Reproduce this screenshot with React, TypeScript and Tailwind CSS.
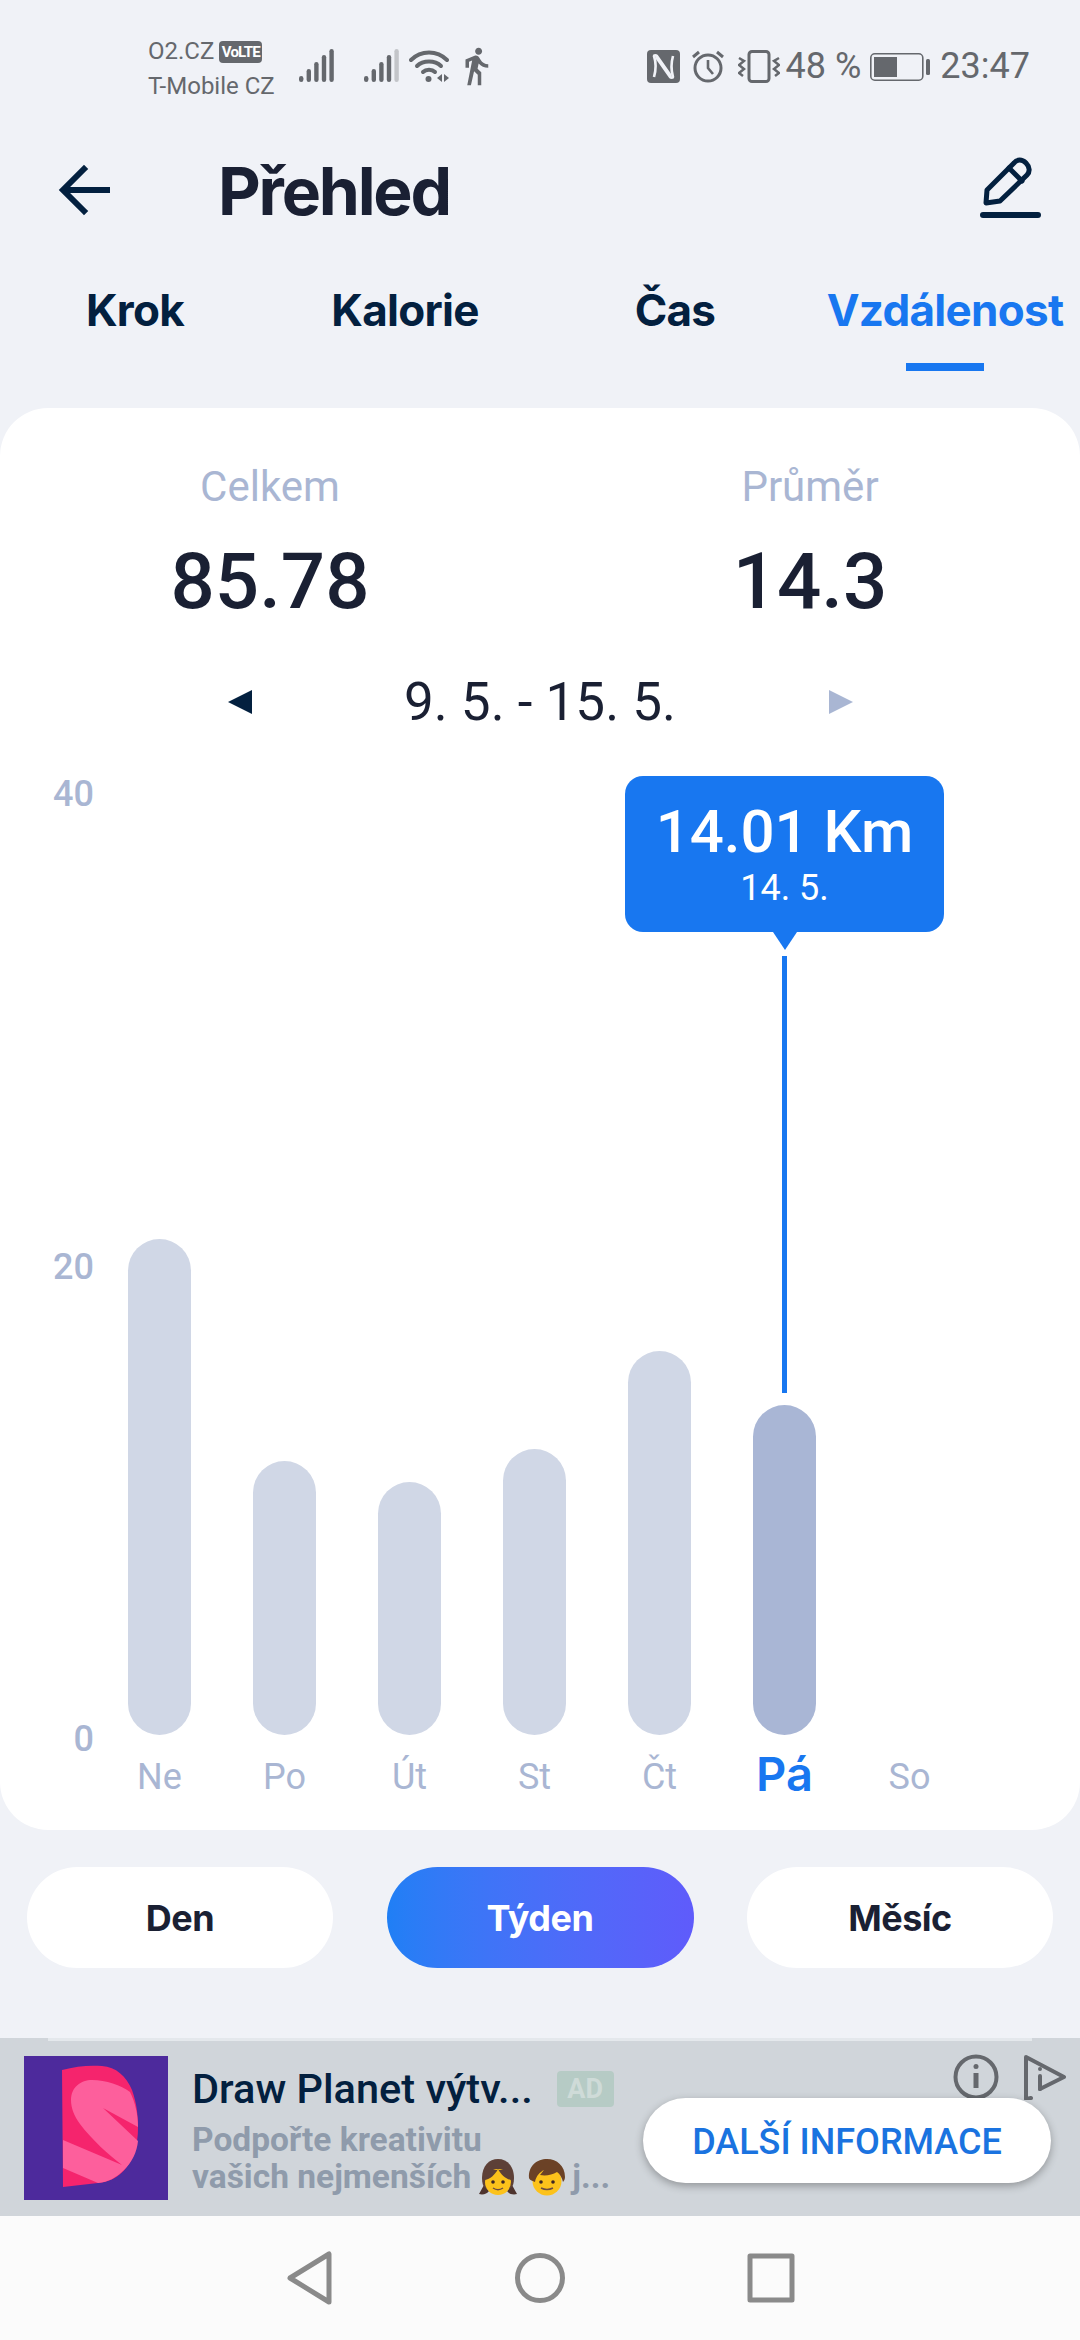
// Přehled — weekly distance screen

import React from "react";
import { MdDirectionsWalk } from "react-icons/md";

const NAVY = "#03203f";
const STATUS = "#65686d";

const tabs = ["Krok", "Kalorie", "Čas", "Vzdálenost"];

// px per km read off the axis
const PX_PER_KM = 23.63;
const days = [
  { label: "Ne", km: 20.99 },
  { label: "Po", km: 11.6 },
  { label: "Út", km: 10.71 },
  { label: "St", km: 12.1 },
  { label: "Čt", km: 16.25 },
  { label: "Pá", km: 14.01, active: true },
  { label: "So", km: 0 },
];

// ── Status bar icons ─────────────────────────────────────────
function Signal({ dim }: { dim?: boolean }) {
  const heights = [6, 13, 20, 27, 33];
  return (
    <svg width="35" height="33" viewBox="0 0 35 33">
      {heights.map((h, i) => (
        <rect
          key={i}
          x={i * 7.6}
          y={33 - h}
          width="4.4"
          height={h}
          rx="2.2"
          fill={dim && i === 4 ? "#c3c5c9" : STATUS}
        />
      ))}
    </svg>
  );
}

function Wifi() {
  return (
    <svg width="40" height="34" viewBox="0 0 40 34" fill="none" stroke={STATUS} strokeWidth="4" strokeLinecap="round">
      <path d="M2 11C12 1 28 1 38 11" />
      <path d="M8 17C14 11 26 11 32 17" />
      <path d="M14 23C17 20 23 20 26 23" />
      <circle cx="19.500" cy="30" r="3" fill={STATUS} stroke="none" />
      <path d="M33 25v8l-5-4zM35 25v8l5-4z" fill={STATUS} stroke="none" />
    </svg>
  );
}

function Nfc() {
  return (
    <svg width="33" height="33" viewBox="0 0 33 33">
      <rect width="33" height="33" rx="4" fill={STATUS} />
      <path d="M7 27C9 20 9 12 7 6C7 5 9 5 10 6L24 26" fill="none" stroke="#f0f2f7" strokeWidth="2.6" />
      <path d="M26 6C24 13 24 20 26 27C26 28 24 28 23 27L9 7" fill="none" stroke="#f0f2f7" strokeWidth="2.6" />
    </svg>
  );
}

function Alarm() {
  return (
    <svg width="34" height="33" viewBox="0 0 34 33" fill="none" stroke={STATUS} strokeWidth="3">
      <circle cx="17" cy="18" r="13" />
      <path d="M17 10v8l5 6" strokeWidth="2.600" />
      <path d="M2 7l6-5M32 7l-6-5" strokeWidth="3" />
    </svg>
  );
}

function Vibrate() {
  return (
    <svg width="42" height="33" viewBox="0 0 42 33" fill="none" stroke={STATUS}>
      <rect x="11" y="1.500" width="20" height="30" rx="3" strokeWidth="3" />
      <path d="M1 8l5 3-5 4 5 4-5 4 4 3" strokeWidth="2.500" />
      <path d="M41 8l-5 3 5 4-5 4 5 4-4 3" strokeWidth="2.500" />
    </svg>
  );
}

function Battery() {
  return (
    <svg width="60" height="28" viewBox="0 0 60 28">
      <rect x="0.800" y="0.800" width="52" height="26.400" rx="4" fill="none" stroke={STATUS} strokeWidth="1.600" />
      <rect x="4" y="4" width="23" height="20" fill={STATUS} />
      <rect x="56" y="6" width="4" height="16" rx="1.500" fill={STATUS} />
    </svg>
  );
}

function StatusBar() {
  return (
    <div className="h-[100px] shrink-0 flex items-start justify-between pl-[148px] pr-[50px] pt-[34px] text-[#65686d] font-['Roboto',sans-serif]">
      <div className="flex items-start">
        <div className="w-[151px] text-[24px] leading-[35px]">
          <div className="flex items-center gap-[5px]">
            <span>O2.CZ</span>
            <span className="w-[43px] h-[22px] rounded-[4px] bg-[#65686d] text-white text-[15px] leading-[22px] font-bold text-center tracking-[-0.8px]">VoLTE</span>
          </div>
          <div className="whitespace-nowrap">T-Mobile CZ</div>
        </div>
        <div className="flex items-start gap-[30px] pt-[15px]">
          <Signal />
          <div className="flex items-start gap-[10px]">
            <Signal dim />
            <Wifi />
            <MdDirectionsWalk size={42} color={STATUS} className="mt-[-4px] ml-[-4px]" />
          </div>
        </div>
      </div>
      <div className="flex items-center pt-[16px] text-[36px] leading-[33px] whitespace-nowrap">
        <Nfc />
        <span className="ml-[11px]"><Alarm /></span>
        <span className="ml-[13px]"><Vibrate /></span>
        <span className="ml-[6px]">48 %</span>
        <span className="ml-[9px]"><Battery /></span>
        <span className="ml-[10px]">23:47</span>
      </div>
    </div>
  );
}

// ── Ad emoji ─────────────────────────────────────────────────
function Girl() {
  return (
    <svg width="38" height="38" viewBox="0 0 38 38" className="shrink-0">
      <path d="M5 27L0 36c4 1 8 0 10-3zM33 27l5 9c-4 1-8 0-10-3z" fill="#4e342e" />
      <path d="M3 20C3 8 10 1 19 1s16 7 16 19c0 5-1 8-3 10H6c-2-2-3-5-3-10z" fill="#5d4037" />
      <circle cx="19" cy="24" r="13" fill="#fcc21b" />
      <path d="M6 22c5-1 10-5 13-11 3 6 8 10 13 11V12H6z" fill="#5d4037" />
      <circle cx="14" cy="24" r="1.800" fill="#3e2723" />
      <circle cx="24" cy="24" r="1.800" fill="#3e2723" />
      <path d="M14 30c3 2 7 2 10 0" stroke="#6d4c41" strokeWidth="1.500" fill="none" />
    </svg>
  );
}

function Boy() {
  return (
    <svg width="38" height="38" viewBox="0 0 38 38" className="shrink-0">
      <circle cx="19" cy="23" r="14.500" fill="#fcc21b" />
      <path d="M1 20C0 8 9 1 19 1s18 7 18 18c0 2-1 4-2 5-1-4-3-8-6-10-5 3-11 4-17 3l4-5c-4 2-8 6-9 12-1-1-5-1-6-4z" fill="#6b4226" />
      <circle cx="13" cy="24" r="1.800" fill="#3e2723" />
      <circle cx="25" cy="24" r="1.800" fill="#3e2723" />
      <path d="M13 30c4 2 8 2 12 0" stroke="#6d4c41" strokeWidth="1.500" fill="none" />
    </svg>
  );
}

function AdLogo() {
  return (
    <svg width="144" height="144" viewBox="0 0 144 144" className="shrink-0">
      <rect width="144" height="144" fill="#4d2a9c" />
      <path d="M38 14C52 10 66 9 78 10C92 11 102 20 108 34C113 48 114 60 114 72C114 88 110 102 102 112C94 122 84 126 74 127L39 131Z" fill="#f5246d" />
      <path d="M39 84L98 109C84 98 68 84 56 68C50 60 47 52 47 44C47 31 57 24 68 24C82 24 97 29 106 36C111 46 114 58 114 71L79 52L114 85C113 96 108 106 100 114C92 122 84 126 74 127L39 112Z" fill="#fd5f9c" />
    </svg>
  );
}

export default function App() {
  return (
    <div className="w-[1080px] h-[2340px] overflow-hidden flex flex-col bg-[#f0f2f7] font-['Roboto',sans-serif]">
      <StatusBar />

      {/* Header */}
      <div className="h-[180px] shrink-0 flex items-center pl-[58px] pr-[33px]">
        <svg width="52" height="52" viewBox="0 0 52 52" fill="none" stroke={NAVY} strokeWidth="6" strokeLinecap="square">
          <path d="M26 5L5 26L26 47M7 26H50" />
        </svg>
        <h1 className="ml-[108px] mt-[2px] text-[66px] leading-none font-bold text-[#1a2033] tracking-[-2.2px] font-['Inter',sans-serif]">Přehled</h1>
        <svg width="70" height="72" viewBox="15 6 70 72" className="ml-auto" fill="none" stroke={NAVY} strokeLinejoin="round" strokeLinecap="round">
          <path d="M25 42L52 15C55 11 60 11 64 15C68 19 68 24 65 27L38 53L24 55Z" strokeWidth="5" />
          <path d="M47 20L60 33" strokeWidth="5" />
          <path d="M21 67H76" strokeWidth="6" />
        </svg>
      </div>

      {/* Tabs */}
      <div className="h-[92px] shrink-0 grid grid-cols-4 font-['Inter',sans-serif]">
        {tabs.map((t, i) => (
          <div key={t} className="flex flex-col items-center">
            <span className={`text-[44px] leading-[60px] font-bold whitespace-nowrap tracking-[-0.7px] ${i === 3 ? "text-[#1877f0]" : "text-[#03203f]"}`}>{t}</span>
            {i === 3 && <div className="mt-[23px] w-[78px] h-[8px] bg-[#1877f0]" />}
          </div>
        ))}
      </div>

      {/* Card */}
      <div className="mt-[36px] h-[1422px] shrink-0 bg-white rounded-[48px] flex flex-col">
        <div className="grid grid-cols-2 pt-[55px] text-center">
          <div>
            <div className="text-[42px] leading-[48px] text-[#a9b6d3]">Celkem</div>
            <div className="mt-[24px] text-[78px] leading-[94px] font-medium text-[#1a2033]">85.78</div>
          </div>
          <div>
            <div className="text-[42px] leading-[48px] text-[#a9b6d3]">Průměr</div>
            <div className="mt-[24px] text-[78px] leading-[94px] font-medium text-[#1a2033]">14.3</div>
          </div>
        </div>

        <div className="mt-[43px] flex items-center justify-center h-[60px]">
          <span className="w-0 h-0 border-y-[12px] border-y-transparent border-r-[24px] border-r-[#03203f]" />
          <span className="w-[577px] text-center text-[53px] leading-[60px] text-[#1a2033]">9. 5. - 15. 5.</span>
          <span className="w-0 h-0 border-y-[12px] border-y-transparent border-l-[24px] border-l-[#a9b6d3]" />
        </div>

        {/* Chart */}
        <div className="mt-[44px] flex items-start">
          <div className="w-[97px] shrink-0 h-[981px] pr-[3px] flex flex-col justify-between text-right text-[36px] leading-[36px] font-medium text-[#a9b6d3]">
            <span>40</span>
            <span>20</span>
            <span>0</span>
          </div>
          <div className="flex">
            {days.map((d) => (
              <div key={d.label} className="w-[125px] flex flex-col items-center">
                <div className="h-[959px] flex flex-col items-center justify-end">
                  {d.active && (
                    <>
                      <div className="w-[319px] h-[156px] shrink-0 rounded-[18px] bg-[#1877f0] text-white text-center pt-[21px]">
                        <div className="text-[60px] leading-[70px] font-medium whitespace-nowrap">14.01 Km</div>
                        <div className="text-[36px] leading-[42px]">14. 5.</div>
                      </div>
                      <div className="w-0 h-0 shrink-0 border-x-[12px] border-x-transparent border-t-[18px] border-t-[#1877f0]" />
                      <div className="w-[5px] h-[437px] shrink-0 mt-[6px] mb-[12px] bg-[#1877f0]" />
                    </>
                  )}
                  {d.km > 0 && (
                    <div
                      className={`w-[63px] rounded-full ${d.active ? "bg-[#a9b6d5]" : "bg-[#d0d7e6]"}`}
                      style={{ height: Math.round(d.km * PX_PER_KM) }}
                    />
                  )}
                </div>
                <div className="h-[64px] w-full flex items-end justify-center">
                  {d.active ? (
                    <span className="text-[47px] leading-[50px] font-semibold text-[#1877f0] font-['Inter',sans-serif]">{d.label}</span>
                  ) : (
                    <span className="text-[36px] leading-[44px] text-[#a9b6d3]">{d.label}</span>
                  )}
                </div>
              </div>
            ))}
          </div>
        </div>
      </div>

      {/* Range switch */}
      <div className="mt-[37px] shrink-0 flex justify-between px-[27px] font-['Inter',sans-serif] text-[36px] font-bold tracking-[-0.5px]">
        <button className="w-[306px] h-[101px] rounded-full bg-white text-[#1a2033]">Den</button>
        <button className="w-[307px] h-[101px] rounded-full bg-gradient-to-r from-[#1f7ff5] to-[#5f5bfb] text-white">Týden</button>
        <button className="w-[306px] h-[101px] rounded-full bg-white text-[#1a2033]">Měsíc</button>
      </div>

      {/* Ad */}
      <div className="mt-[70px] h-[178px] shrink-0 bg-[#d0d5da]">
        <div className="mx-[48px] h-[3px] bg-[#e4e8ec]" />
        <div className="flex pl-[24px] pt-[15px]">
          <AdLogo />
          <div className="ml-[24px] w-[451px] shrink-0">
            <div className="flex items-center h-[50px] mt-[8px]">
              <span className="text-[41.5px] leading-[50px] font-medium text-[#03203f] whitespace-nowrap">Draw Planet výtv...</span>
              <span className="ml-[24px] w-[57px] h-[36px] rounded-[4px] bg-[#b6cbc5] text-[#cfdbd8] text-[27px] leading-[36px] font-bold text-center">AD</span>
            </div>
            <div className="mt-[6px] text-[33.5px] leading-[39px] font-bold text-[#8f9bab]">Podpořte kreativitu</div>
            <div className="flex items-center mt-[-2px] text-[33.5px] leading-[39px] font-bold text-[#8f9bab] whitespace-nowrap">
              <span>vašich nejmenších</span>
              <span className="ml-[8px]"><Girl /></span>
              <span className="ml-[11px]"><Boy /></span>
              <span className="ml-[6px]">j...</span>
            </div>
          </div>
          <div className="w-[408px] shrink-0">
            <div className="h-[44px] flex justify-end items-start gap-[24px] mt-[-2px]">
              <svg width="46" height="46" viewBox="0 0 46 46" fill="none" stroke="#65686d" strokeWidth="4">
                <circle cx="23" cy="23" r="20.500" />
                <path d="M23 19v15" strokeWidth="5" />
                <circle cx="23" cy="12.500" r="2.500" fill="#65686d" stroke="none" />
              </svg>
              <svg width="44" height="46" viewBox="0 0 44 46" className="mr-[-16px]" fill="none" stroke="#65686d" strokeWidth="4" strokeLinecap="round" strokeLinejoin="round">
                <path d="M8 44L3 45V3L41 23L17 35" />
                <path d="M17 22v13" />
                <circle cx="17" cy="15" r="2" fill="#65686d" stroke="none" />
              </svg>
            </div>
            <button className="w-[408px] h-[85px] pt-[3px] rounded-full bg-white shadow-[0_3px_8px_rgba(0,0,0,0.3)] text-[36px] font-medium text-[#1a73e0]">DALŠÍ INFORMACE</button>
          </div>
        </div>
      </div>

      {/* Navigation bar */}
      <div className="flex-1 bg-[#fbfbfb] flex items-center pl-[286px]">
        <svg width="48" height="56" viewBox="0 0 48 56" fill="none" stroke="#8a8a8a" strokeWidth="5" strokeLinejoin="round">
          <path d="M43 4V52L4 28Z" />
        </svg>
        <svg width="52" height="54" viewBox="0 0 52 54" className="ml-[180px]" fill="none" stroke="#8a8a8a" strokeWidth="5">
          <circle cx="26" cy="27" r="22.500" />
        </svg>
        <svg width="48" height="50" viewBox="0 0 48 50" className="ml-[181px]" fill="none" stroke="#8a8a8a" strokeWidth="5" strokeLinejoin="round">
          <rect x="3" y="3" width="42" height="44" />
        </svg>
      </div>
    </div>
  );
}
